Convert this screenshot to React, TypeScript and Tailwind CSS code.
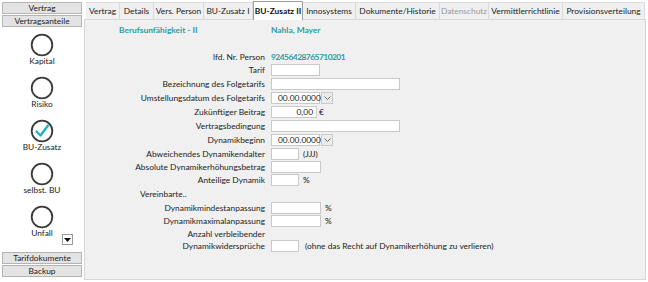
import React from "react";

const font = { fontFamily: '"Lato", "Liberation Sans", sans-serif' };

function SideButton({ label }: { label: string }) {
  return (
    <div className="mx-[2px] h-[12px] border border-[#b4b4b4] bg-[#e3e3e3] text-center text-[8.4px] leading-[10px] text-[#222]">
      {label}
    </div>
  );
}

function Circle({ checked }: { checked?: boolean }) {
  return (
    <svg width="24" height="24" viewBox="0 0 24 24">
      <circle cx="12" cy="12" r="10.3" fill="none" stroke="#3a3a3a" strokeWidth="1.8" />
      {checked && (
        <path d="M6.5 12.5 L10.5 16.5 L18 6.5" fill="none" stroke="#1cb3c4" strokeWidth="2.4" strokeLinecap="round" strokeLinejoin="round" />
      )}
    </svg>
  );
}

function SideItem({ label, checked, extra }: { label: string; checked?: boolean; extra?: boolean }) {
  return (
    <div className="relative flex h-[43px] flex-col items-center">
      <Circle checked={checked} />
      <div className="-mt-[1px] text-[8.4px] leading-[10px] text-[#222]">{label}</div>
      {extra && (
        <div className="absolute left-[62px] top-[29px] flex h-[11px] w-[11px] items-center justify-center border border-[#9a9a9a] bg-white">
          <svg width="7" height="4" viewBox="0 0 7 4"><path d="M0 0 L7 0 L3.5 4 Z" fill="#111" /></svg>
        </div>
      )}
    </div>
  );
}

const tabs = [
  { t: "Vertrag", w: 34 },
  { t: "Details", w: 34 },
  { t: "Vers. Person", w: 50 },
  { t: "BU-Zusatz I", w: 49 },
  { t: "BU-Zusatz II", w: 50, active: true },
  { t: "Innosystems", w: 53 },
  { t: "Dokumente/Historie", w: 84 },
  { t: "Datenschutz", w: 49, disabled: true },
  { t: "Vermittlerrichtlinie", w: 74 },
  { t: "Provisionsverteilung", w: 82 },
];

function Input({ w, children, right }: { w: number; children?: React.ReactNode; right?: boolean }) {
  return (
    <div
      className={`flex h-[12px] items-center border border-[#c9c9c9] bg-white px-[3px] text-[8.4px] leading-[10px] text-[#222] ${right ? "justify-end" : ""}`}
      style={{ width: w }}
    >
      {children}
    </div>
  );
}

function DateInput() {
  return (
    <div className="flex items-center">
      <Input w={49}>
        <span className="pl-[3px]">00.00.0000</span>
      </Input>
      <div className="ml-[1px] flex h-[12px] w-[12px] items-center justify-center border border-[#c9c9c9] bg-[#ececec]">
        <svg width="7" height="4" viewBox="0 0 7 4"><path d="M0.5 0.5 L3.5 3.5 L6.5 0.5" fill="none" stroke="#666" strokeWidth="1" /></svg>
      </div>
    </div>
  );
}

function Row({ label, h = 14, children }: { label: React.ReactNode; h?: number; children?: React.ReactNode }) {
  return (
    <div className="flex items-center" style={{ height: h }}>
      <div className="w-[180px] whitespace-nowrap text-right text-[8.4px] leading-[10px] text-[#222]">{label}</div>
      <div className="ml-[6px] flex items-center gap-[4px] whitespace-nowrap text-[8.4px] leading-[10px] text-[#222]">{children}</div>
    </div>
  );
}

export default function App() {
  return (
    <div className="flex h-[282px] w-[648px] bg-white" style={font}>
      <div className="flex w-[84px] flex-col pt-[2px]">
        <SideButton label="Vertrag" />
        <div className="h-[1px]" />
        <SideButton label="Vertragsanteile" />
        <div className="h-[6px]" />
        <SideItem label="Kapital" />
        <SideItem label="Risiko" />
        <SideItem label="BU-Zusatz" checked />
        <SideItem label="selbst. BU" />
        <SideItem label="Unfall" extra />
        <div className="h-[4px]" />
        <SideButton label="Tarifdokumente" />
        <div className="h-[1px]" />
        <SideButton label="Backup" />
      </div>
      <div className="flex flex-1 flex-col pr-[2px]">
        <div className="flex h-[19px] items-end pl-[2px]">
          {tabs.map((tab) => (
            <div
              key={tab.t}
              className={
                tab.active
                  ? "relative z-10 -mb-[1px] flex h-[19px] items-center justify-center whitespace-nowrap border border-b-0 border-[#9e9e9e] bg-white text-[8.4px] font-bold text-[#111]"
                  : `flex h-[17px] items-center justify-center whitespace-nowrap border-r border-t border-[#dadada] bg-[#f0f0f0] text-[8.4px] ${tab.disabled ? "text-[#9a9a9a]" : "text-[#222]"}`
              }
              style={{ width: tab.w }}
            >
              {tab.t}
            </div>
          ))}
        </div>
        <div className="mb-[2px] flex flex-1 flex-col border border-[#d6d6d6] bg-[#f0f0f0]">
          <div className="mt-[4px] flex h-[12px] items-center text-[8.4px] font-bold text-[#2b9ca2]">
            <div className="ml-[34px] w-[152px]">Berufsunfähigkeit - II</div>
            <div>Nahla, Mayer</div>
          </div>
          <div className="h-[14px]" />
          <Row label="lfd. Nr. Person" h={13}>
            <span className="font-bold tracking-[-0.5px] text-[#2b9ca2]">92456428765710201</span>
          </Row>
          <Row label="Tarif"><Input w={49} /></Row>
          <Row label="Bezeichnung des Folgetarifs"><Input w={129} /></Row>
          <Row label="Umstellungsdatum des Folgetarifs"><DateInput /></Row>
          <Row label="Zukünftiger Beitrag">
            <div className="flex items-center gap-[2px]">
              <Input w={46} right>0,00</Input>
              <span>€</span>
            </div>
          </Row>
          <Row label="Vertragsbedingung"><Input w={129} /></Row>
          <Row label="Dynamikbeginn"><DateInput /></Row>
          <Row label="Abweichendes Dynamikendalter" h={13}>
            <Input w={28} />
            <span>(JJJ)</span>
          </Row>
          <Row label="Absolute Dynamikerhöhungsbetrag" h={13}><Input w={50} /></Row>
          <Row label="Anteilige Dynamik">
            <Input w={28} />
            <span>%</span>
          </Row>
          <div className="flex h-[14px] items-center pl-[55px] text-[8.4px] text-[#222]">Vereinbarte..</div>
          <Row label="Dynamikmindestanpassung" h={13}>
            <Input w={50} />
            <span>%</span>
          </Row>
          <Row label="Dynamikmaximalanpassung">
            <Input w={50} />
            <span>%</span>
          </Row>
          <div className="flex h-[12px] items-center">
            <div className="w-[180px] text-right text-[8.4px] text-[#222]">Anzahl verbleibender</div>
          </div>
          <Row label="Dynamikwidersprüche" h={12}>
            <Input w={28} />
            <span className="ml-[2px]">(ohne das Recht auf Dynamikerhöhung zu verlieren)</span>
          </Row>
        </div>
      </div>
    </div>
  );
}
